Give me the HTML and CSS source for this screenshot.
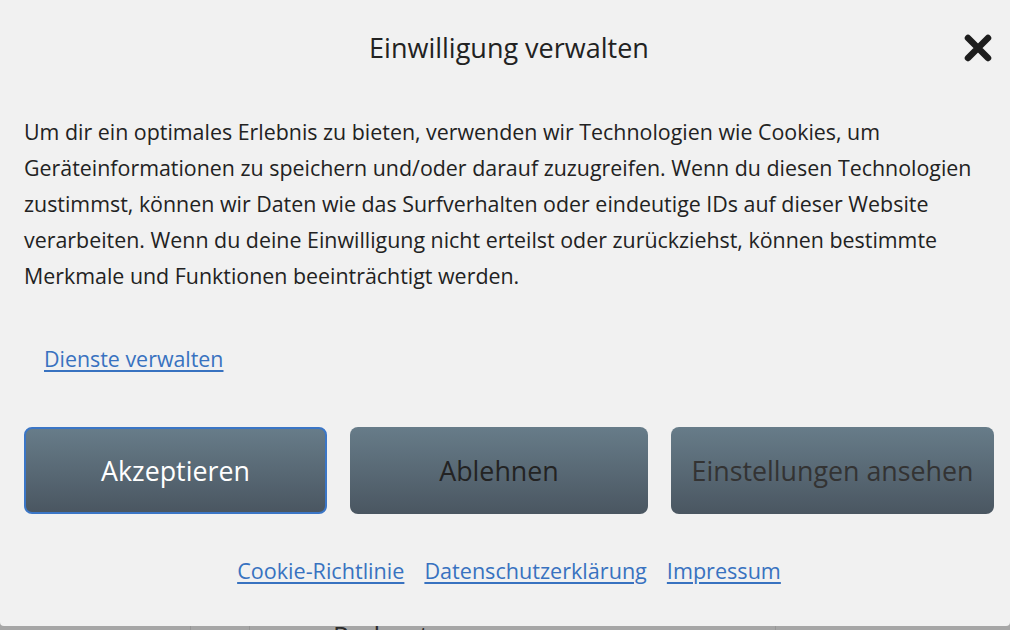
FILE: index.html
```html
<!DOCTYPE html>
<html lang="de">
<head>
<meta charset="utf-8">
<title>Einwilligung verwalten</title>
<link rel="stylesheet" href="styles.css">
</head>
<body>
  <div class="page">
    <nav class="page-nav">
      <span class="nav-cell nav-a"></span>
      <span class="nav-cell nav-b"></span>
      <span class="nav-cell nav-c">Podcasts</span>
      <span class="nav-cell nav-d"></span>
    </nav>
  </div>

  <div class="consent" role="dialog" aria-labelledby="consent-title">
    <header class="consent-head">
      <h2 id="consent-title" class="consent-title">Einwilligung verwalten</h2>
      <button class="consent-close" aria-label="Schließen">
        <svg width="30" height="30" viewBox="0 0 30 30" aria-hidden="true">
          <path d="M5 5 L25 25 M25 5 L5 25" stroke="#1d1d1d" stroke-width="6.5" stroke-linecap="round" fill="none"/>
        </svg>
      </button>
    </header>

    <p class="consent-text">Um dir ein optimales Erlebnis zu bieten, verwenden wir Technologien wie Cookies, um Geräteinformationen zu speichern und/oder darauf zuzugreifen. Wenn du diesen Technologien zustimmst, können wir Daten wie das Surfverhalten oder eindeutige IDs auf dieser Website verarbeiten. Wenn du deine Einwilligung nicht erteilst oder zurückziehst, können bestimmte Merkmale und Funktionen beeinträchtigt werden.</p>

    <div class="consent-manage"><a href="#">Dienste verwalten</a></div>

    <div class="consent-buttons">
      <button class="btn btn-accept">Akzeptieren</button>
      <button class="btn btn-deny">Ablehnen</button>
      <button class="btn btn-prefs">Einstellungen ansehen</button>
    </div>

    <div class="consent-links">
      <a href="#">Cookie-Richtlinie</a>
      <a href="#">Datenschutzerklärung</a>
      <a href="#">Impressum</a>
    </div>
  </div>
</body>
</html>
```

FILE: styles.css
```css
* { box-sizing: border-box; }

html, body {
  margin: 0;
  height: 100%;
}

body {
  background: #a6a6a6;
  font-family: "Open Sans", "Noto Sans", sans-serif;
  color: #222;
  overflow: hidden;
}

/* dimmed page behind the dialog */
.page {
  padding-top: 622px;
}

.page-nav {
  display: flex;
  height: 40px;
}

.nav-cell {
  display: block;
  height: 40px;
  border-right: 1px solid #979797;
  color: #2d2d2d;
  font-size: 26px;
  line-height: 1;
}
.nav-a { width: 191px; }
.nav-b { width: 59px; }
.nav-c { width: 526px; padding-left: 83px; }
.nav-d { flex: 1; border-right: 0; }

/* consent dialog */
.consent {
  position: fixed;
  top: 0;
  left: 0;
  right: 0;
  height: 626px;
  background: #f1f1f1;
  border-radius: 0 0 4px 4px;
  padding: 30px 16px 0 24px;
}

.consent-head {
  position: relative;
  display: flex;
  justify-content: center;
  align-items: center;
  height: 36px;
}

.consent-title {
  margin: 0;
  font-size: 27px;
  font-weight: 400;
  line-height: 36px;
  color: #222;
}

.consent-close {
  position: absolute;
  right: 1px;
  top: 3px;
  width: 30px;
  height: 30px;
  padding: 0;
  border: 0;
  background: none;
  cursor: pointer;
}
.consent-close svg { display: block; }

.consent-text {
  margin: 48px 0 0;
  font-size: 21.4px;
  line-height: 36px;
  color: #222;
}

.consent-manage {
  margin-top: 47px;
  padding-left: 20px;
  font-size: 21.4px;
  line-height: 36px;
}

a {
  color: #3872c0;
  text-decoration: underline;
  text-underline-offset: 3px;
}

.consent-buttons {
  margin-top: 50px;
  display: grid;
  grid-template-columns: 303fr 298fr 323fr;
  gap: 23px;
}

.btn {
  height: 87px;
  border: 0;
  border-radius: 8px;
  background: linear-gradient(#677c89, #4a5661);
  font-family: inherit;
  font-size: 26.8px;
  color: #232323;
  cursor: pointer;
}

.btn-accept {
  color: #fff;
  border: 2px solid #3b76c6;
}

.btn-prefs { color: #333; }

.consent-links {
  margin-top: 39px;
  display: flex;
  justify-content: center;
  gap: 20px;
  font-size: 21.6px;
  line-height: 36px;
}
```
